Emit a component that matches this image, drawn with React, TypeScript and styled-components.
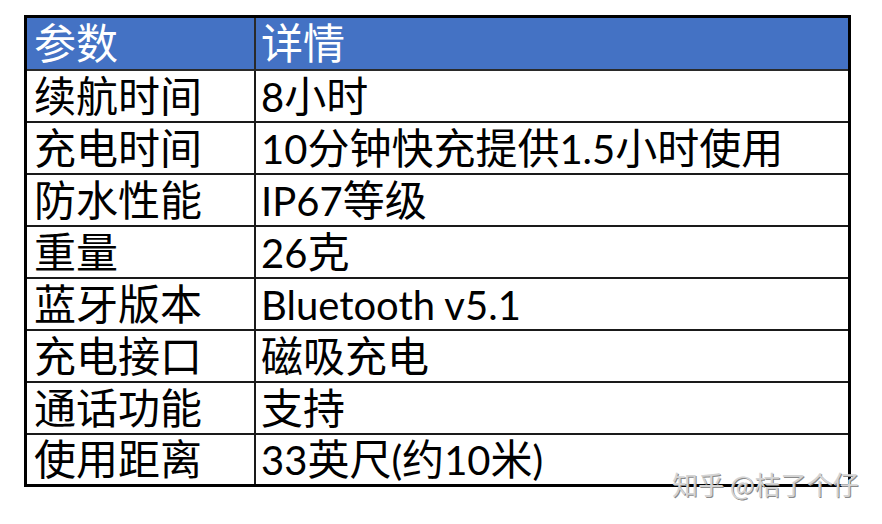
import React from "react";
import styled, { createGlobalStyle } from "styled-components";

const GlobalStyle = createGlobalStyle`
  html, body {
    margin: 0;
    padding: 0;
    background: #ffffff;
  }
  body {
    font-family: Lato, "Noto Sans CJK SC", sans-serif;
  }
`;

const rows: [string, string][] = [
  ["续航时间", "8小时"],
  ["充电时间", "10分钟快充提供1.5小时使用"],
  ["防水性能", "IP67等级"],
  ["重量", "26克"],
  ["蓝牙版本", "Bluetooth v5.1"],
  ["充电接口", "磁吸充电"],
  ["通话功能", "支持"],
  ["使用距离", "33英尺(约10米)"],
];

// split a string into latin and CJK runs so the latin parts can be sized apart
const splitRuns = (text: string) => {
  const parts = text.match(/[\u0000-\u024f]+|[^\u0000-\u024f]+/g) || [];
  return parts.map((part, i) =>
    /^[\u0000-\u024f]+$/.test(part) ? (
      <Latin key={i}>{part}</Latin>
    ) : (
      <span key={i}>{part}</span>
    )
  );
};

export default function App() {
  return (
    <Page>
      <GlobalStyle />
      <SpecTable>
        <thead>
          <HeadRow>
            <HeadCell $first>参数</HeadCell>
            <HeadCell>详情</HeadCell>
          </HeadRow>
        </thead>
        <tbody>
          {rows.map(([name, value]) => (
            <BodyRow key={name}>
              <Cell $first>{name}</Cell>
              <Cell>{splitRuns(value)}</Cell>
            </BodyRow>
          ))}
        </tbody>
      </SpecTable>
      <Watermark>知乎 @桔了个仔</Watermark>
    </Page>
  );
}

/**
 * Styles
 */
const Page = styled.div`
  position: relative;
  width: 882px;
  height: 524px;
  padding: 15px 0 0 24px;
  box-sizing: border-box;
`;

const SpecTable = styled.table`
  border-collapse: collapse;
  width: 827px;
  border: 3px solid #000;
  table-layout: fixed;
`;

const HeadRow = styled.tr`
  height: 53px;
  background: #4472c4;
`;

const BodyRow = styled.tr`
  height: 52px;
  background: #ffffff;
`;

const HeadCell = styled.th<{ $first?: boolean }>`
  width: ${({ $first }) => ($first ? "220px" : "auto")};
  padding: 0 0 0 ${({ $first }) => ($first ? "7px" : "5px")};
  border: 2px solid #2a2a2a;
  color: #ffffff;
  font-size: 42px;
  font-weight: 400;
  line-height: 1;
  text-align: left;
  vertical-align: middle;
  white-space: nowrap;
`;

const Cell = styled.td<{ $first?: boolean }>`
  padding: 0 0 0 ${({ $first }) => ($first ? "7px" : "5px")};
  border: 2px solid #1a1a1a;
  color: #000;
  font-size: 42px;
  line-height: 1;
  text-align: left;
  vertical-align: middle;
  white-space: nowrap;
`;

const Latin = styled.span`
  font-family: Lato, sans-serif;
  font-size: 40px;
`;

const Watermark = styled.div`
  position: absolute;
  left: 672px;
  top: 471px;
  font-family: "Noto Sans CJK SC", sans-serif;
  font-size: 26px;
  line-height: 1;
  color: #d4d4d4;
  text-shadow: 1px 1px 0 #8a8a8a;
  white-space: nowrap;
`;
